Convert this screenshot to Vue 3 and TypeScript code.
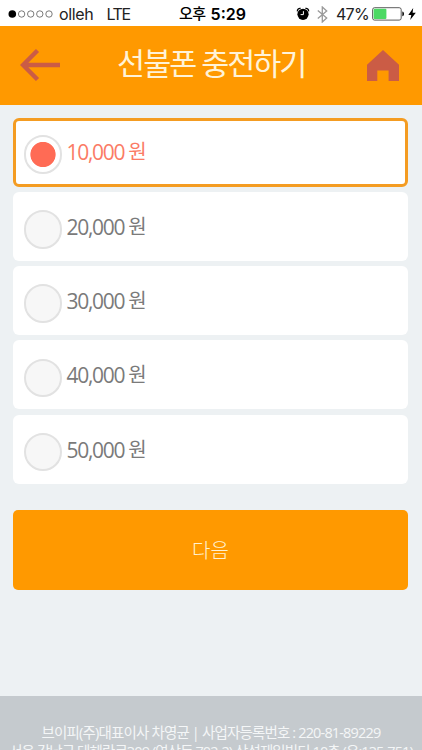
<script setup lang="ts">
import { ref } from 'vue'

const amounts: string[] = ['10,000', '20,000', '30,000', '40,000', '50,000']
const selected = ref<string>('10,000')
</script>

<template>
  <div class="screen">
    <div class="status">
      <div class="carrier">
        <svg class="signal" width="46" height="10" viewBox="0 0 46 10">
          <circle cx="4.3" cy="5" r="3.8" fill="#000" />
          <g fill="none" stroke="#444" stroke-width=".7">
            <circle cx="13.6" cy="5" r="3.2" />
            <circle cx="22.7" cy="5" r="3.2" />
            <circle cx="31.8" cy="5" r="3.2" />
            <circle cx="41" cy="5" r="3.2" />
          </g>
        </svg>
        <span class="operator">olleh</span>
        <span class="network">LTE</span>
      </div>
      <div class="clock"><span class="period">오후</span><span class="time">5:29</span></div>
      <div class="indicators">
        <svg width="14" height="14" viewBox="0 0 14 14">
          <circle cx="7" cy="7.3" r="5.6" />
          <path d="M1.4 4.4A2.6 2.6 0 0 1 4.6 1.5M9.4 1.5a2.6 2.6 0 0 1 3.2 2.9" fill="none" stroke="#000" stroke-width="1.3" />
          <path d="M7.4 4.2V7.6H4.6" fill="none" stroke="#fff" stroke-width="1" />
        </svg>
        <svg class="bluetooth" width="11" height="17" viewBox="0 0 11 17">
          <path d="M.8 4.5 9.7 12 5.3 16V1l4.4 4L.8 12.5" fill="none" stroke="#999" stroke-width="1.3" />
        </svg>
        <span class="percent">47%</span>
        <svg class="battery" width="33" height="14" viewBox="0 0 33 14">
          <rect x=".6" y=".7" width="28.6" height="12.4" rx="2" fill="#fff" stroke="#333" stroke-width=".8" />
          <rect x="1.6" y="1.7" width="12.8" height="10.4" rx="1" fill="#4cd964" />
          <path d="M30.3 4.5c2.3.4 2.3 4.4 0 4.8Z" fill="#111" />
        </svg>
        <svg class="bolt" width="8" height="12" viewBox="0 0 8 12"><path d="M5.2 0 .3 7h3L2.2 12 7.8 4.8H4.6Z" /></svg>
      </div>
    </div>

    <header class="header">
      <button class="icon-button" aria-label="뒤로">
        <svg width="40" height="32" viewBox="0 0 40 32">
          <path d="M40 16H3M17.5 1.5 3 16l14.5 14.5" fill="none" stroke="#cb5c45" stroke-width="4.4" />
        </svg>
      </button>
      <h1>선불폰 충전하기</h1>
      <button class="icon-button" aria-label="홈">
        <svg width="32" height="31" viewBox="0 0 32 31">
          <path d="M0 14.7 16 0l16 14.7V31H21.6V20.5H10.3V31H0Z" fill="#cb5c45" />
        </svg>
      </button>
    </header>

    <main>
      <div class="options" role="radiogroup">
        <div
          v-for="amount in amounts"
          :key="amount"
          class="option"
          :class="{ active: amount === selected }"
          role="radio"
          :aria-checked="amount === selected"
          @click="selected = amount"
        >
          <span class="radio"></span>
          <span class="amount">{{ amount }}</span>
          <span class="won">원</span>
        </div>
      </div>
      <button class="next">다음</button>
    </main>

    <footer>
      <p class="company">브이피(주)대표이사 차영균 | 사업자등록번호 : 220-81-89229</p>
      <p class="address">서울 강남구 테헤란로309 (역삼동 702-2) 삼성제일빌딩 10층 (우:135-751)</p>
    </footer>
  </div>
</template>

<style>
body {
  margin: 0;
  overflow: hidden;
}
</style>

<style scoped>
.screen {
  width: 422px;
  height: 750px;
  overflow: hidden;
  display: flex;
  flex-direction: column;
  background: #edf1f3;
  font-family: "Open Sans", "Noto Sans CJK KR", sans-serif;
}
svg {
  display: block;
  flex: none;
}
button {
  border: 0;
  padding: 0;
  font-family: inherit;
}
.status {
  flex: none;
  height: 25.5px;
  box-sizing: border-box;
  padding: 2px 6px 0 8px;
  display: grid;
  grid-template-columns: 171px 1fr auto;
  align-items: center;
  background: #fff;
  color: #222;
  font: 16px/24px Inter, "Noto Sans CJK KR", sans-serif;
}
.carrier,
.clock,
.indicators {
  display: flex;
  align-items: center;
  white-space: nowrap;
}
.operator {
  margin-left: 5px;
  letter-spacing: -0.35px;
}
.network {
  margin-left: 13px;
  letter-spacing: -1.4px;
}
.clock {
  color: #000;
  font-weight: 500;
}
.period {
  font-size: 15px;
  letter-spacing: -0.5px;
}
.time {
  margin-left: 5px;
  font-weight: 600;
}
.bluetooth {
  margin-left: 7px;
}
.percent {
  margin-left: 7.5px;
  letter-spacing: -0.7px;
}
.battery {
  margin-left: 3px;
}
.bolt {
  margin-left: 3px;
}
.header {
  flex: none;
  height: 79.5px;
  box-sizing: border-box;
  padding: 0 23.5px 0 20px;
  display: flex;
  align-items: center;
  justify-content: space-between;
  background: #ff9900;
}
.icon-button {
  background: none;
}
h1 {
  margin: 0 4px 4px 0;
  color: #fff3d8;
  font-size: 30.5px;
  line-height: 44px;
  font-weight: 400;
  letter-spacing: -2px;
  white-space: nowrap;
}
main {
  flex: none;
  height: 591px;
  box-sizing: border-box;
  padding: 12.5px 14px 0 13px;
}
.options {
  display: grid;
  grid-auto-rows: 69px;
  gap: 5.3px;
}
.option {
  box-sizing: border-box;
  padding: 6px 10.5px 0;
  display: flex;
  align-items: center;
  border-radius: 6px;
  background: #fff;
  color: #7a7a7a;
  font-size: 21px;
  line-height: 30px;
}
.active {
  border: 3px solid #f49c22;
  color: #fb7b65;
}
.active.option {
  padding: 5px 7.5px 0;
}
.radio {
  flex: none;
  width: 38.5px;
  height: 38.5px;
  box-sizing: border-box;
  border: 2.5px solid #e2e2e2;
  border-radius: 50%;
  background: #f7f7f7;
}
.active .radio {
  background: radial-gradient(circle, #ff6b55 12.2px, #fff 13px);
}
.amount {
  margin: 0 0 5px 4.5px;
  letter-spacing: -1.3px;
}
.won {
  margin: 0 0 5px 4px;
  font-size: 20px;
}
.next {
  width: 100%;
  height: 79.5px;
  margin-top: 26.5px;
  border-radius: 5px;
  background: #ff9900;
  color: #fff1d3;
  font-size: 20px;
  font-weight: 300;
}
footer {
  flex: none;
  height: 54px;
  padding-top: 27px;
  box-sizing: border-box;
  background: #c5cace;
  color: #f4f6f7;
  font-size: 14.5px;
  line-height: 19px;
  text-align: center;
  white-space: nowrap;
}
footer p {
  margin: 0;
}
.company {
  letter-spacing: -0.84px;
}
.address {
  letter-spacing: -0.9px;
}
</style>
